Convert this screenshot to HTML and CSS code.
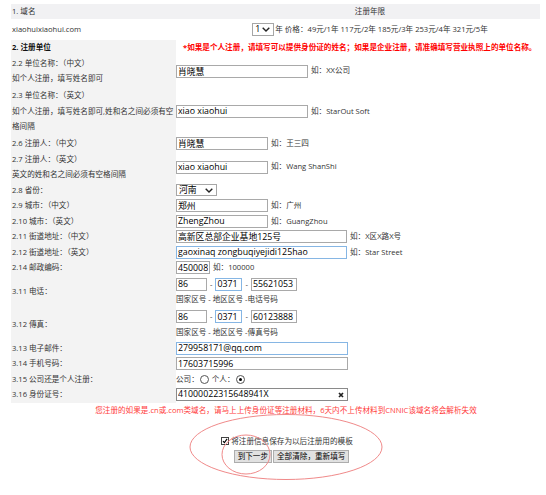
FILE: index.html
```html
<!DOCTYPE html>
<html lang="zh-CN">
<head>
<meta charset="utf-8">
<title>域名注册信息</title>
<link rel="stylesheet" href="styles.css">
</head>
<body>
<div class="page">
  <div class="dom-head">
    <div class="dc1">1. 域名</div>
    <div class="dc2">注册年限</div>
  </div>
  <div class="dom-row">
    <div class="dc1">xiaohuixiaohui.com</div>
    <div class="dc2"><span class="sel sel-year"><span class="sel-text">1</span><svg class="chev" viewBox="0 0 8 5"><path d="M0.7 0.7 L4 4 L7.3 0.7"/></svg></span><span class="price">年 价格：49元/1年 117元/2年 185元/3年 253元/4年 321元/5年</span></div>
  </div>

  <div class="form">
    <div class="lab"><b>2. 注册单位</b></div>
    <div class="val note">*如果是个人注册，请填写可以提供身份证的姓名；如果是企业注册，请准确填写营业执照上的单位名称。</div>

    <div class="lab"><span>2.2 单位名称：（中文）</span><span>如个人注册，填写姓名即可</span></div>
    <div class="val"><input class="ipt w132" value="肖晓慧"><span class="eg">如：XX公司</span></div>

    <div class="lab p3"><span>2.3 单位名称：（英文）</span><span>如个人注册，填写姓名即可,姓和名之间必须有空</span><span>格间隔</span></div>
    <div class="val"><input class="ipt w132" value="xiao xiaohui"><span class="eg">如：StarOut Soft</span></div>

    <div class="lab">2.6 注册人：（中文）</div>
    <div class="val"><input class="ipt w92" value="肖晓慧"><span class="eg">如：王三四</span></div>

    <div class="lab"><span>2.7 注册人：（英文）</span><span>英文的姓和名之间必须有空格间隔</span></div>
    <div class="val"><input class="ipt w92" value="xiao xiaohui"><span class="eg">如：Wang ShanShi</span></div>

    <div class="lab">2.8 省份：</div>
    <div class="val"><span class="sel sel-prov"><span class="sel-text">河南</span><svg class="chev" viewBox="0 0 8 5"><path d="M0.7 0.7 L4 4 L7.3 0.7"/></svg></span></div>

    <div class="lab">2.9 城市：（中文）</div>
    <div class="val"><input class="ipt w92" value="郑州"><span class="eg">如：广州</span></div>

    <div class="lab">2.10 城市：（英文）</div>
    <div class="val"><input class="ipt w92" value="ZhengZhou"><span class="eg">如：GuangZhou</span></div>

    <div class="lab">2.11 街道地址：（中文）</div>
    <div class="val"><input class="ipt w171" value="高新区总部企业基地125号"><span class="eg">如：X区X路X号</span></div>

    <div class="lab">2.12 街道地址：（英文）</div>
    <div class="val"><input class="ipt w171 blue" value="gaoxinaq zongbuqiyejidi125hao"><span class="eg">如：Star Street</span></div>

    <div class="lab">2.14 邮政编码：</div>
    <div class="val"><input class="ipt w34" value="450008"><span class="eg">如：100000</span></div>

    <div class="lab">3.11 电话：</div>
    <div class="val phone">
      <div class="tel"><input class="ipt w31" value="86"><span class="dash">-</span><input class="ipt w27 blue" value="0371"><span class="dash">-</span><input class="ipt w46" value="55621053"></div>
      <div>国家区号 - 地区区号 -电话号码</div>
    </div>

    <div class="lab">3.12 傳真：</div>
    <div class="val phone">
      <div class="tel"><input class="ipt w31" value="86"><span class="dash">-</span><input class="ipt w27 blue" value="0371"><span class="dash">-</span><input class="ipt w46" value="60123888"></div>
      <div>国家区号 - 地区区号 -傳真号码</div>
    </div>

    <div class="lab">3.13 电子邮件：</div>
    <div class="val"><input class="ipt w172 blue" value="279958171@qq.com"></div>

    <div class="lab">3.14 手机号码：</div>
    <div class="val"><input class="ipt w172" value="17603715996"></div>

    <div class="lab">3.15 公司还是个人注册：</div>
    <div class="val">公司：<span class="radio"></span>个人：<span class="radio on"></span></div>

    <div class="lab">3.16 身份证号：</div>
    <div class="val"><span class="clear-field"><input class="ipt-bare" value="41000022315648941X"><svg class="xicon" viewBox="0 0 6 6"><path d="M1 1 L5 5 M5 1 L1 5"/></svg></span></div>
  </div>

  <p class="warn">您注册的如果是.cn或.com类域名，请马上上传身份证等注册材料，6天内不上传材料到CNNIC该域名将会解析失效</p>

  <div class="actions">
    <div class="save"><span class="check"><svg viewBox="0 0 8 8"><path d="M1.3 4.2 L3.2 6.2 L6.8 1.2"/></svg></span><span>将注册信息保存为以后注册用的模板</span></div>
    <div class="btns"><button class="btn" type="button">到下一步</button><button class="btn" type="button">全部清除，重新填写</button></div>
  </div>

  <svg class="marks" width="546" height="495" viewBox="0 0 546 495">
    <ellipse cx="286" cy="447" rx="96" ry="32.5"/>
    <ellipse cx="246" cy="454.5" rx="24" ry="19.5"/>
  </svg>
</div>
</body>
</html>
```

FILE: styles.css
```css
* { box-sizing: border-box; }
html, body { margin: 0; padding: 0; background: #fff; }
body {
  font-family: "Open Sans", "Noto Sans CJK SC", sans-serif;
  font-size: 7.6px;
  line-height: 15.5px;
  color: #333;
}
.page {
  position: relative;
  width: 546px;
  height: 495px;
  padding-top: 4px;
  overflow: hidden;
}

/* domain table */
.dom-head, .dom-row {
  margin-left: 11px;
  width: 529px;
  display: grid;
  grid-template-columns: 189px 340px;
}
.dom-head {
  background: #f1f1f3;
  height: 15px;
  line-height: 15px;
}
.dom-row {
  height: 21px;
  align-items: center;
}
.dc1 { padding-left: 1px; }
.dc2 {
  display: flex;
  align-items: center;
  justify-content: center;
}
.price { margin-left: 1px; }

/* fake selects */
.sel {
  display: inline-flex;
  align-items: center;
  justify-content: space-between;
  height: 13px;
  border: 1px solid #a6a6a6;
  background: #fff;
  color: #000;
  padding: 0 3px 0 2px;
  font-size: 8.8px;
  line-height: 11px;
}
.sel-year { width: 22px; }
.sel-prov { width: 41px; height: 12px; }
.chev {
  width: 8px;
  height: 5px;
  fill: none;
  stroke: #222;
  stroke-width: 1.4;
}

/* form grid */
.form {
  margin-left: 11px;
  width: 529px;
  display: grid;
  grid-template-columns: 165px 364px;
}
.lab {
  background: #f3f3f3;
  padding-left: 1px;
  display: flex;
  flex-direction: column;
  justify-content: center;
  white-space: nowrap;
}
.lab b { color: #111; }
.lab.p3 { padding-top: 1.5px; padding-bottom: 1.5px; }
.val {
  display: flex;
  align-items: center;
  white-space: nowrap;
}
.note {
  padding-left: 7px;
  color: #ff0000;
  font-weight: bold;
}
.eg { margin-left: 3px; }

.ipt {
  height: 13px;
  border: 1px solid #a9a9a9;
  padding: 0 1px;
  margin: 0;
  font-family: "Open Sans", "Noto Sans CJK SC", sans-serif;
  font-size: 8.8px;
  line-height: 11px;
  color: #000;
  background: #fff;
  outline: none;
}
.ipt.blue { border-color: #86b6e4; }
.w27 { width: 27px; }
.w31 { width: 31px; }
.w34 { width: 34px; }
.w46 { width: 46px; }
.w92 { width: 92px; }
.w132 { width: 132px; }
.w171 { width: 171px; }
.w172 { width: 172px; }

.phone {
  flex-direction: column;
  align-items: flex-start;
  justify-content: center;
  padding: 1px 0 0.5px;
}
.tel {
  display: flex;
  align-items: center;
  height: 15.5px;
}
.dash { margin: 0 3px; }

.radio {
  display: inline-flex;
  width: 9px;
  height: 9px;
  border: 1px solid #555;
  border-radius: 50%;
  background: #fff;
  margin: 0 3px 0 1px;
}
.radio.on::after {
  content: "";
  width: 3px;
  height: 3px;
  margin: auto;
  border-radius: 50%;
  background: #000;
}

.clear-field {
  display: inline-flex;
  align-items: center;
  width: 172px;
  height: 13px;
  border: 1px solid #8a8a8a;
  background: #fff;
}
.ipt-bare {
  flex: 1;
  min-width: 0;
  height: 11px;
  border: 0;
  padding: 0 1px;
  margin: 0;
  font-family: "Open Sans", "Noto Sans CJK SC", sans-serif;
  font-size: 8.8px;
  line-height: 11px;
  color: #000;
  outline: none;
  background: transparent;
}
.xicon {
  width: 6px;
  height: 6px;
  margin-right: 3px;
  fill: none;
  stroke: #222;
  stroke-width: 1.7;
}

/* bottom */
.warn {
  margin: 0 0 0 11px;
  width: 529px;
  padding-left: 21px;
  text-align: center;
  color: #ff3b3b;
  white-space: nowrap;
}
.actions {
  margin: 15.5px 0 0 11px;
  width: 529px;
  padding-left: 23px;
  display: flex;
  flex-direction: column;
  align-items: center;
}
.save {
  display: flex;
  align-items: center;
  height: 15.5px;
}
.check {
  display: inline-flex;
  width: 8px;
  height: 8px;
  border: 1px solid #444;
  background: #fff;
  margin-right: 2px;
}
.check svg {
  width: 6px;
  height: 6px;
  fill: none;
  stroke: #000;
  stroke-width: 1.5;
}
.btns {
  display: flex;
  align-items: center;
  gap: 1px;
  height: 15.5px;
  margin-left: 9px;
}
.btn {
  height: 13px;
  margin: 0;
  padding: 0 3px;
  border: 1px solid #adadad;
  background: #e1e1e1;
  color: #000;
  font-family: "Open Sans", "Noto Sans CJK SC", sans-serif;
  font-size: 7.6px;
  line-height: 11px;
}

.marks {
  position: absolute;
  left: 0;
  top: 0;
  pointer-events: none;
  fill: none;
  stroke: #f08a8a;
  stroke-width: 1;
}
```
